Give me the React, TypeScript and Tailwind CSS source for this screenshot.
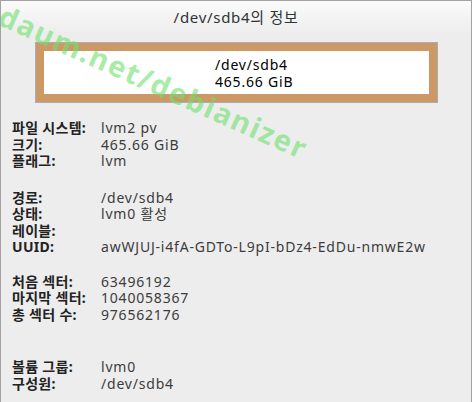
import React from "react";

const font = { fontFamily: '"Noto Sans", "Noto Sans CJK KR", sans-serif' };

type Row = [string, string];

const groups: { rows: Row[]; gap: string }[] = [
  {
    gap: "mt-0",
    rows: [
      ["파일 시스템:", "lvm2 pv"],
      ["크기:", "465.66 GiB"],
      ["플래그:", "lvm"],
    ],
  },
  {
    gap: "mt-[20px]",
    rows: [
      ["경로:", "/dev/sdb4"],
      ["상태:", "lvm0 활성"],
      ["레이블:", ""],
      ["UUID:", "awWJUJ-i4fA-GDTo-L9pI-bDz4-EdDu-nmwE2w"],
    ],
  },
  {
    gap: "mt-[18px]",
    rows: [
      ["처음 섹터:", "63496192"],
      ["마지막 섹터:", "1040058367"],
      ["총 섹터 수:", "976562176"],
    ],
  },
  {
    gap: "mt-[36px]",
    rows: [
      ["볼륨 그룹:", "lvm0"],
      ["구성원:", "/dev/sdb4"],
    ],
  },
];

export default function App() {
  return (
    <div
      className="relative w-[472px] h-[402px] overflow-hidden bg-[#ededed] border-x border-t border-[#a3a3a3]"
      style={font}
    >
      {/* Title bar */}
      <div className="h-[33px] flex items-center justify-center bg-gradient-to-b from-[#fafafa] to-[#ededed] text-[15px] tracking-[0.7px] text-[#2e3436]">
        /dev/sdb4의 정보
      </div>

      {/* Partition graphic */}
      <div className="ml-[34px] mt-[8px] w-[403px] h-[61px] border border-[#a9aeb3] bg-[#cc9966] p-[8px]">
        <div className="h-full bg-white pl-[171px] flex flex-col justify-center text-[14px] leading-[17px] tracking-[0.8px] text-black">
          <span>/dev/sdb4</span>
          <span>465.66 GiB</span>
        </div>
      </div>

      {/* Details */}
      <div className="pl-[11px] pt-[17px] text-[14px] leading-[16.5px] tracking-[0.8px]">
        {groups.map((g, i) => (
          <div key={i} className={g.gap}>
            {g.rows.map(([label, value]) => (
              <div key={label} className="flex">
                <span className="w-[89px] shrink-0 font-bold text-[#222222] tracking-[0.3px]">{label}</span>
                <span className="text-[#3c3c3c]">{value}</span>
              </div>
            ))}
          </div>
        ))}
      </div>

      {/* Watermark */}
      <div className="absolute left-[0px] top-[-2px] origin-left rotate-[24deg] text-[29px] leading-[29px] font-bold tracking-[1.6px] text-[#6ee06e]/60 pointer-events-none whitespace-nowrap">
        daum.net/debianizer
      </div>
    </div>
  );
}
